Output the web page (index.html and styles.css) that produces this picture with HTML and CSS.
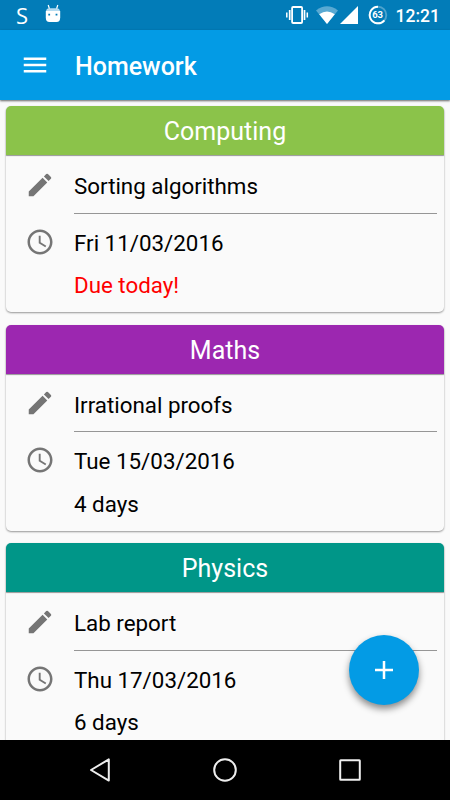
FILE: index.html
```html
<!DOCTYPE html>
<html lang="en">
<head>
  <meta charset="UTF-8">
  <meta name="viewport" content="width=device-width, initial-scale=1.0">
  <title>Homework</title>
  <link rel="stylesheet" href="styles.css">
</head>
<body>

  <!-- Shared icons -->
  <svg class="defs" width="0" height="0">
    <symbol id="pencil" viewBox="0 0 24 24">
      <path d="M3 17.25V21h3.75L17.81 9.94l-3.75-3.75L3 17.25zM20.71 7.04a1 1 0 0 0 0-1.41l-2.34-2.34a1 1 0 0 0-1.41 0l-1.83 1.83 3.75 3.75 1.83-1.83z"/>
    </symbol>
    <symbol id="clock" viewBox="0 0 24 24">
      <path d="M11.99 2C6.47 2 2 6.48 2 12s4.47 10 9.99 10C17.52 22 22 17.52 22 12S17.52 2 11.99 2zM12 20c-4.42 0-8-3.58-8-8s3.58-8 8-8 8 3.58 8 8-3.58 8-8 8z"/>
      <path d="M12.5 7H11v6l5.25 3.15.75-1.23-4.5-2.67z"/>
    </symbol>
  </svg>

  <div class="status-bar">
    <span class="status-s">S</span>
    <svg class="android" width="16" height="20" viewBox="0 0 16 20" fill="#fff">
      <path d="M3.2 1l1.3 4M12.8 1l-1.3 4" stroke="#fff" stroke-width="1.2"/>
      <path d="M1 7.2Q1.4 4.2 4.2 4.2h7.6Q14.6 4.2 15 7.2z" fill="#b5dbf0"/>
      <path d="M.8 7h14.4v6.5Q15.2 18 11.5 18h-7Q.8 18 .8 13.5z"/>
      <path d="M3.3 9.8h1.8v1.8H3.3zM10.6 9.8h1.8v1.8h-1.8z" fill="#027cb8"/>
    </svg>
    <div class="status-right">
      <svg class="vibrate" width="24" height="20" viewBox="0 0 24 20" fill="none" stroke="#fff">
        <rect x="7.1" y="2" width="10" height="16" rx="1" stroke-width="1.8"/>
        <path d="M4.7 5v10M19.5 5v10" stroke-width="1.7"/>
        <path d="M1.8 7.5v5M22.3 7.5v5" stroke-width="1.5"/>
      </svg>
      <svg class="wifi" width="22" height="18" viewBox="0 0 22 18">
        <path d="M0 4.5Q11-3.8 22 4.5L11 18z" fill="#59a9d2"/>
        <path d="M3.2 8.3Q11 2.6 18.8 8.3L11 18z" fill="#fff"/>
      </svg>
      <svg class="signal" width="18" height="18" viewBox="0 0 18 18">
        <path d="M18 0v18H0z" fill="#fff"/>
      </svg>
      <div class="battery">
        <svg width="20" height="20" viewBox="0 0 20 20" fill="none" stroke-width="1.9">
          <circle cx="10" cy="10" r="8.3" stroke="#4ea3cd"/>
          <path d="M10 1.7A8.3 8.3 0 1 0 16.4 15.3" stroke="#fff"/>
        </svg>
        <span>63</span>
      </div>
      <span class="time">12:21</span>
    </div>
  </div>

  <div class="toolbar">
    <svg class="menu" width="30" height="30" viewBox="0 0 24 24" fill="#fff">
      <path d="M3 18h18v-2H3v2zm0-5h18v-2H3v2zm0-7v2h18V6H3z"/>
    </svg>
    <h1>Homework</h1>
  </div>

  <div class="list">
    <div class="card">
      <h2 class="computing">Computing</h2>
      <div class="row task">
        <svg class="icon"><use href="#pencil"/></svg>
        <p>Sorting algorithms</p>
      </div>
      <div class="row date">
        <svg class="icon"><use href="#clock"/></svg>
        <p>Fri 11/03/2016</p>
      </div>
      <p class="due today">Due today!</p>
    </div>

    <div class="card">
      <h2 class="maths">Maths</h2>
      <div class="row task">
        <svg class="icon"><use href="#pencil"/></svg>
        <p>Irrational proofs</p>
      </div>
      <div class="row date">
        <svg class="icon"><use href="#clock"/></svg>
        <p>Tue 15/03/2016</p>
      </div>
      <p class="due">4 days</p>
    </div>

    <div class="card">
      <h2 class="physics">Physics</h2>
      <div class="row task">
        <svg class="icon"><use href="#pencil"/></svg>
        <p>Lab report</p>
      </div>
      <div class="row date">
        <svg class="icon"><use href="#clock"/></svg>
        <p>Thu 17/03/2016</p>
      </div>
      <p class="due">6 days</p>
    </div>
  </div>

  <!-- Floating add button -->
  <div class="fab">
    <svg width="18" height="18" viewBox="0 0 18 18" stroke="#fff" stroke-width="2.5">
      <path d="M9 0v18M0 9h18"/>
    </svg>
  </div>

  <div class="nav-bar">
    <svg width="30" height="30" viewBox="0 0 30 30"><path d="M23.8 4.4v21.2L6 15z"/></svg>
    <svg width="30" height="30" viewBox="0 0 30 30"><circle cx="15" cy="15" r="10.8"/></svg>
    <svg width="30" height="30" viewBox="0 0 30 30"><rect x="5.2" y="5.2" width="19.6" height="19.6" rx=".5"/></svg>
  </div>

</body>
</html>
```
FILE: styles.css
```css
* {
  box-sizing: border-box;
}

body {
  margin: 0;
  height: 800px;
  display: flex;
  flex-direction: column;
  overflow: hidden;
  position: relative;
  background-color: #fafafa;
  font-family: Roboto, sans-serif;
  color: #000;
}

h1, h2, p {
  margin: 0;
  font-weight: 400;
}

svg {
  display: block;
  flex: none;
}

.defs {
  position: absolute;
}

/* Status bar */
.status-bar {
  height: 30px;
  flex: none;
  display: flex;
  align-items: center;
  padding: 0 10px 0 15px;
  background-color: #027cb8;
  color: #fff;
}

.status-s {
  width: 30px;
  padding-left: 1px;
  font-family: "Open Sans", sans-serif;
  font-size: 22px;
  line-height: 30px;
}

.android {
  margin-top: -3px;
}

.status-right {
  margin-left: auto;
  display: flex;
  align-items: center;
}

.wifi {
  margin-left: 7px;
}

.signal {
  margin-left: 2px;
}

.battery {
  position: relative;
  margin-left: 10px;
}

.battery span {
  position: absolute;
  top: 0;
  left: 0;
  width: 20px;
  text-align: center;
  font-size: 9.5px;
  font-weight: 700;
  line-height: 20px;
}

.time {
  margin-left: 8px;
  padding-top: 1px;
  font-size: 17.5px;
  font-weight: 500;
}

/* Toolbar */
.toolbar {
  height: 70px;
  flex: none;
  display: flex;
  align-items: center;
  padding-left: 20px;
  background-color: #039be5;
  box-shadow: 0 1px 2px rgba(0, 0, 0, 0.6);
  z-index: 1;
}

.toolbar h1 {
  margin-left: 25px;
  padding-top: 2px;
  color: #fff;
  font-size: 25px;
  font-weight: 500;
}

/* Cards */
.list {
  flex: 1;
  min-height: 0;
  overflow: hidden;
  padding: 6px 6px 0;
}

.card {
  height: 206px;
  margin-bottom: 12.5px;
  border-radius: 5px;
  background-color: #fafafa;
  box-shadow: 0 1px 2px rgba(0, 0, 0, 0.4);
}

.card h2 {
  height: 49.4px;
  border-radius: 5px 5px 0 0;
  color: #fff;
  font-size: 25px;
  line-height: 52px;
  text-align: center;
  box-shadow: 0 1px 1px rgba(0, 0, 0, 0.4);
}

.computing {
  background-color: #8bc34a;
}

.maths {
  background-color: #9c27b0;
}

.physics {
  background-color: #009688;
}

.row {
  display: flex;
  margin-right: 7px;
}

.row p {
  flex: 1;
}

.row p, .due {
  font-size: 22.35px;
}

.icon {
  width: 30px;
  height: 30px;
  margin: 14.5px 19px 0;
  fill: #757575;
}

.task {
  height: 58.6px;
}

.task p {
  border-bottom: 1px solid #969696;
  line-height: 63px;
}

.date .icon {
  margin-top: 12.6px;
}

.date p {
  line-height: 58px;
}

.due {
  margin-top: -16.6px;
  padding-left: 68px;
  line-height: 60px;
}

.today {
  color: #f00;
}

.fab {
  position: absolute;
  left: 349px;
  top: 635px;
  width: 70px;
  height: 70px;
  display: flex;
  align-items: center;
  justify-content: center;
  border-radius: 50%;
  background-color: #039be5;
  box-shadow: 0 4px 7px rgba(0, 0, 0, 0.45);
}

/* Navigation bar */
.nav-bar {
  height: 60px;
  flex: none;
  display: flex;
  align-items: center;
  justify-content: center;
  gap: 95px;
  background-color: #000;
  fill: none;
  stroke: #eee;
  stroke-width: 2;
  stroke-linejoin: round;
}
```
